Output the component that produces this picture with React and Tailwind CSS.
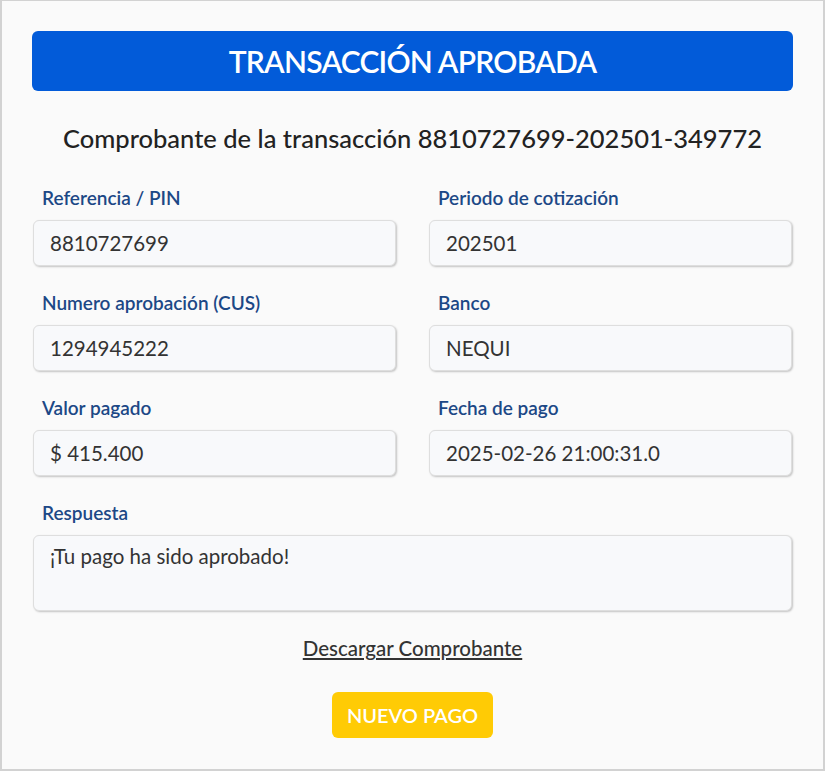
const campos = [
  { label: "Referencia / PIN", valor: "8810727699" },
  { label: "Periodo de cotización", valor: "202501" },
  { label: "Numero aprobación (CUS)", valor: "1294945222" },
  { label: "Banco", valor: "NEQUI" },
  { label: "Valor pagado", valor: "$ 415.400" },
  { label: "Fecha de pago", valor: "2025-02-26 21:00:31.0" },
];

const inputCls =
  "w-full rounded-md border border-[#dedede] bg-[#f8f9fb] px-4 text-[20.5px] text-[#333] shadow-[1px_1px_2px_rgba(0,0,0,0.22)]";

export default function App() {
  return (
    <div className="w-[825px] h-[771px] bg-[#fafafa] border-2 border-t border-[#d2d2d2] px-[30px] pt-[30px] font-['Lato',sans-serif]">
      <div className="h-[60px] rounded-md bg-[#025bd9] flex items-center justify-center">
        <h1 className="text-white text-[30px] font-semibold tracking-tight">TRANSACCIÓN APROBADA</h1>
      </div>

      <p className="mt-[32px] text-center text-[25.5px] leading-[30px] text-[#222] font-medium">
        Comprobante de la transacción 8810727699-202501-349772
      </p>

      <div className="mt-[33px] grid grid-cols-2 gap-x-[33px] gap-y-[25px] px-[1px]">
        {campos.map((c) => (
          <div key={c.label}>
            <p className="pl-[9px] text-[19px] leading-6 font-semibold text-[#1c4886]">{c.label}</p>
            <div className={`${inputCls} mt-[10px] h-[46px] flex items-center`}>{c.valor}</div>
          </div>
        ))}
        <div className="col-span-2">
          <p className="pl-[9px] text-[19px] leading-6 font-semibold text-[#1c4886]">Respuesta</p>
          <div className={`${inputCls} mt-[10px] h-[76px] pt-[8px] leading-6`}>¡Tu pago ha sido aprobado!</div>
        </div>
      </div>

      <div className="mt-[24px] flex flex-col items-center">
        <a className="text-[20.5px] leading-[26px] text-[#333] underline underline-offset-2 font-medium">Descargar Comprobante</a>
        <button className="mt-[31px] h-[46px] w-[161px] rounded-md bg-[#ffcb05] text-white text-[20px] font-semibold">
          NUEVO PAGO
        </button>
      </div>
    </div>
  );
}
